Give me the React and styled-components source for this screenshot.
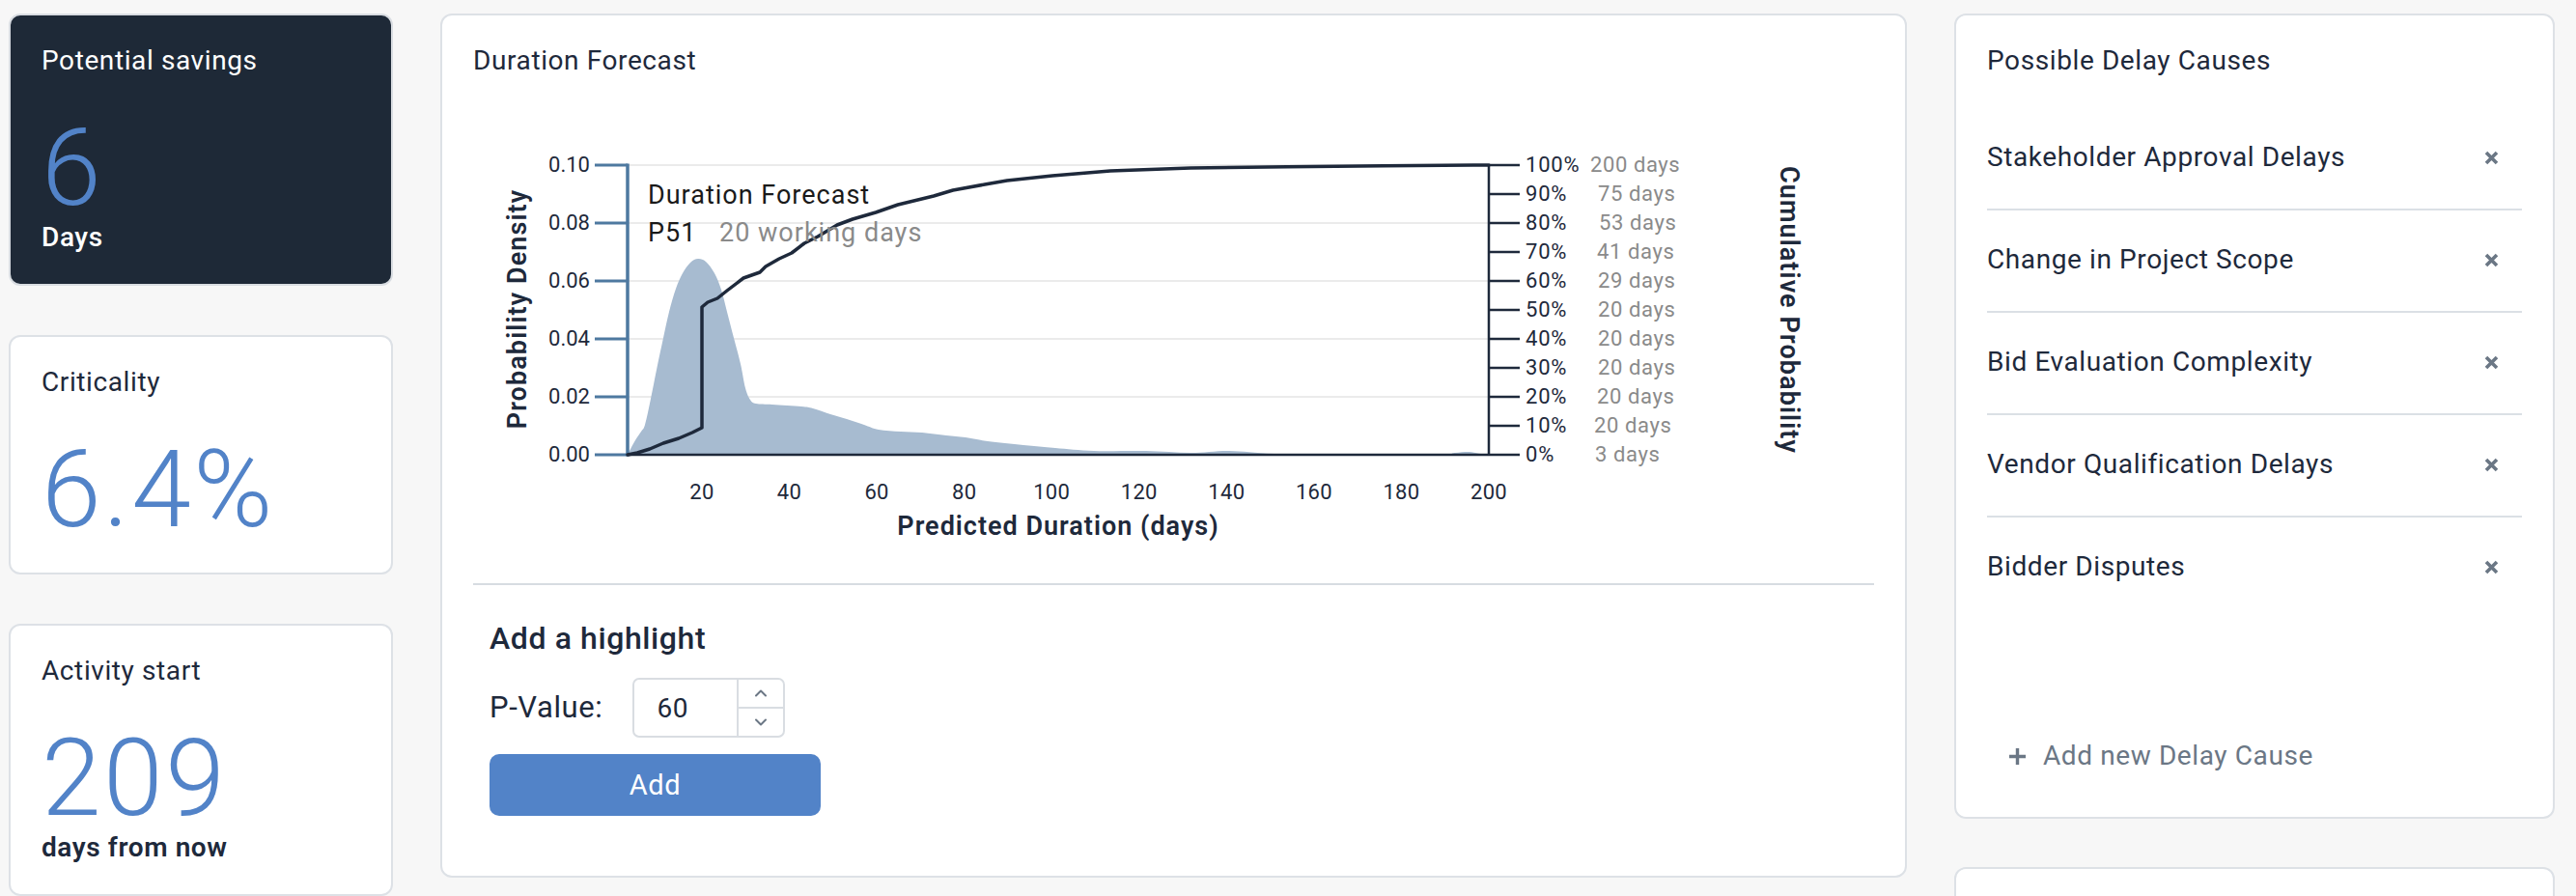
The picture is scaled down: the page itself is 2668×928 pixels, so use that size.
import React from 'react';
import styled, { createGlobalStyle } from 'styled-components';
import { ChevronUp, ChevronDown } from 'lucide-react';

const GlobalStyle = createGlobalStyle`
  html, body {
    margin: 0;
    background: #f7f7f7;
    font-family: Roboto, "Liberation Sans", sans-serif;
    letter-spacing: 0.6px;
    color: #1e293b;
  }
  * { box-sizing: border-box; }
`;

const Page = styled.div`
  display: grid;
  grid-template-columns: 398px 1519px 622px;
  column-gap: 49px;
  align-items: start;
  padding: 14px 0 0 9px;
  height: 928px;
  overflow: hidden;
`;

const Column = styled.div`
  display: flex;
  flex-direction: column;
  gap: ${({ gap }) => gap}px;
`;

const Card = styled.div`
  background: ${({ dark }) => (dark ? '#1e2937' : '#fff')};
  border: 2px solid ${({ dark }) => (dark ? '#d9dde2' : '#dde1e6')};
  border-radius: 12px;
  padding: 30px 32px 31px;
`;

const CardTitle = styled.div`
  font-size: 28px;
  line-height: 34px;
  font-weight: 400;
  color: ${({ dark }) => (dark ? '#fff' : '#1e293b')};
`;

const BigNumber = styled.div`
  margin-top: 39px;
  font-size: 111px;
  line-height: 110px;
  font-weight: 300;
  letter-spacing: 2.5px;
  color: #5283c8;
`;

const Unit = styled.div`
  font-size: 28px;
  line-height: 34px;
  font-weight: ${({ dark }) => (dark ? 500 : 600)};
  color: ${({ dark }) => (dark ? '#fff' : '#1e293b')};
`;

const StatCard = ({ title, value, unit, dark }) => (
  <Card dark={dark}>
    <CardTitle dark={dark}>{title}</CardTitle>
    <BigNumber>{value}</BigNumber>
    {unit && <Unit dark={dark}>{unit}</Unit>}
  </Card>
);

/* ---------- forecast panel ---------- */

const ForecastCard = styled(Card)`
  padding-bottom: 30px;
`;

const ChartSvg = styled.svg`
  display: block;
  margin-top: 16px;
  width: 1451px;
  height: 500px;
  font-family: Roboto, "Liberation Sans", sans-serif;
  letter-spacing: 0;
`;

const Divider = styled.div`
  margin-top: 8px;
  height: 2px;
  background: #d7dce1;
`;

const Highlight = styled.div`
  padding: 0 17px 32px;
`;

const HighlightTitle = styled.div`
  margin-top: 36px;
  font-size: 32px;
  line-height: 38px;
  font-weight: 500;
`;

const FieldRow = styled.div`
  margin-top: 22px;
  display: flex;
  align-items: center;
  gap: 31px;
`;

const FieldLabel = styled.label`
  font-size: 31px;
  line-height: 1.2;
`;

const NumberBox = styled.div`
  width: 158px;
  height: 62px;
  border: 2px solid #d9dde2;
  border-radius: 7px;
  display: flex;
  overflow: hidden;
`;

const NumberValue = styled.div`
  flex: 1;
  display: flex;
  align-items: center;
  padding-left: 23px;
  font-size: 28px;
`;

const Stepper = styled.div`
  width: 48px;
  border-left: 2px solid #d9dde2;
  display: flex;
  flex-direction: column;
`;

const StepButton = styled.div`
  flex: 1;
  display: flex;
  align-items: center;
  justify-content: center;
  color: #6b7785;
  & + & { border-top: 2px solid #d9dde2; }
`;

const AddButton = styled.button`
  margin-top: 17px;
  width: 343px;
  height: 64px;
  border: none;
  border-radius: 10px;
  background: #5283c8;
  color: #fff;
  font-family: inherit;
  letter-spacing: inherit;
  font-size: 29px;
  cursor: pointer;
`;

/* ---------- delay causes ---------- */

const CausesCard = styled(Card)`
  height: 834px;
  padding-bottom: 30px;
  display: flex;
  flex-direction: column;
`;

const CauseList = styled.div`
  margin-top: 32px;
`;

const CauseRow = styled.div`
  display: flex;
  align-items: center;
  justify-content: space-between;
  padding: 34px 0 36px;
  font-size: 28px;
  line-height: 34px;
  border-bottom: ${({ last }) => (last ? 'none' : '2px solid #dbe0e5')};
`;

const RemoveIcon = styled.svg`
  margin-right: 24px;
  flex-shrink: 0;
`;

const AddCause = styled.button`
  margin-top: auto;
  align-self: flex-start;
  display: flex;
  align-items: center;
  gap: 17px;
  padding: 16px 22px;
  border: none;
  background: none;
  color: #6b7785;
  font-family: inherit;
  letter-spacing: inherit;
  font-size: 28px;
  line-height: 34px;
  cursor: pointer;
`;

const BlankCard = styled(Card)`
  height: 240px;
`;

const causes = [
  'Stakeholder Approval Delays',
  'Change in Project Scope',
  'Bid Evaluation Complexity',
  'Vendor Qualification Delays',
  'Bidder Disputes',
];

// plot frame
const X0 = 650;
const X1 = 1542;
const Y0 = 471;
const Y1 = 171;
const xOf = (d) => X0 + ((d - 3) * (X1 - X0)) / 197;

const densityTicks = [0, 0.02, 0.04, 0.06, 0.08, 0.1];
const dayTicks = [20, 40, 60, 80, 100, 120, 140, 160, 180, 200];
const cumulative = [
  ['100%', '200 days', 1647],
  ['90%', '75 days', 1655],
  ['80%', '53 days', 1656],
  ['70%', '41 days', 1654],
  ['60%', '29 days', 1655],
  ['50%', '20 days', 1655],
  ['40%', '20 days', 1655],
  ['30%', '20 days', 1655],
  ['20%', '20 days', 1654],
  ['10%', '20 days', 1651],
  ['0%', '3 days', 1652],
];

const densityPts = [
  [650, 471], [652, 467], [658, 456], [664, 447], [668, 440], [674, 413],
  [680, 383], [687, 350], [693, 323], [700, 299], [707, 283], [715, 272],
  [723, 268], [731, 271], [740, 283], [747, 300], [753, 323], [760, 350],
  [767, 377], [772, 402], [777, 414], [783, 418], [800, 419], [830, 421],
  [842, 423], [860, 429], [877, 434], [895, 440], [910, 445], [933, 447],
  [955, 448], [980, 451], [1000, 453], [1023, 457], [1060, 461], [1093, 464],
  [1133, 467], [1187, 467], [1233, 469], [1273, 467], [1320, 470],
  [1400, 471], [1490, 471], [1507, 469], [1522, 468], [1534, 470], [1542, 471],
];

const cdfPts = [
  [650, 471], [660, 469], [673, 465], [687, 459], [703, 454], [717, 448],
  [727, 443], [727, 318], [733, 313], [743, 309], [753, 301], [770, 288],
  [787, 282], [793, 276], [807, 268], [820, 262], [833, 252], [847, 245],
  [867, 233], [883, 227], [907, 220], [930, 212], [967, 203], [987, 197],
  [1020, 191], [1043, 187], [1090, 182], [1150, 177], [1233, 174],
  [1333, 172.7], [1433, 171.7], [1542, 171],
];

// catmull-rom through the points, as cubic beziers
const smoothPath = (pts) => {
  let d = `M${pts[0][0]},${pts[0][1]}`;
  for (let i = 0; i < pts.length - 1; i++) {
    const p0 = pts[i - 1] || pts[i];
    const p1 = pts[i];
    const p2 = pts[i + 1];
    const p3 = pts[i + 2] || p2;
    const c1 = [p1[0] + (p2[0] - p0[0]) / 6, p1[1] + (p2[1] - p0[1]) / 6];
    const c2 = [p2[0] - (p3[0] - p1[0]) / 6, p2[1] - (p3[1] - p1[1]) / 6];
    d += ` C${c1[0]},${c1[1]} ${c2[0]},${c2[1]} ${p2[0]},${p2[1]}`;
  }
  return d;
};

const ForecastChart = () => (
  <ChartSvg viewBox="490 96 1451 500">
    {densityTicks.slice(1).map((t) => (
      <line key={t} x1={X0} x2={X1} y1={Y0 - t * 3000} y2={Y0 - t * 3000} stroke="#ebebeb" strokeWidth="2" />
    ))}

    <path d={smoothPath(densityPts) + ' Z'} fill="#a7bbd0" />

    {/* left axis: density */}
    <line x1={X0} x2={X0} y1={Y1 - 1.5} y2={Y0 + 1.5} stroke="#4e79a0" strokeWidth="3.5" />
    {densityTicks.map((t) => (
      <g key={t}>
        <line x1="616" x2={X0} y1={Y0 - t * 3000} y2={Y0 - t * 3000} stroke="#4e79a0" strokeWidth="3" />
        <text x="611" y={Y0 - t * 3000 + 7} textAnchor="end" fontSize="22" fill="#1e293b">
          {t.toFixed(2)}
        </text>
      </g>
    ))}
    <text transform="rotate(-90 545 320)" x="545" y="320" textAnchor="middle" fontSize="27" fontWeight="600" letterSpacing="1.1" fill="#1e293b">
      Probability Density
    </text>

    {/* bottom axis */}
    <line x1={X0} x2={X1} y1={Y0} y2={Y0} stroke="#1e293b" strokeWidth="2.5" />
    {dayTicks.map((d) => (
      <text key={d} x={xOf(d)} y="517" textAnchor="middle" fontSize="22" letterSpacing="0.3" fill="#1e293b">
        {d}
      </text>
    ))}
    <text x={(X0 + X1) / 2} y="554" textAnchor="middle" fontSize="27" fontWeight="600" letterSpacing="1" fill="#1e293b">
      Predicted Duration (days)
    </text>

    {/* right axis: cumulative */}
    <line x1={X1} x2={X1} y1={Y1} y2={Y0} stroke="#1e293b" strokeWidth="2.5" />
    {cumulative.map(([pct, days, dx], i) => {
      const y = Y1 + i * 30;
      return (
        <g key={pct}>
          <line x1={X1} x2="1574" y1={y} y2={y} stroke="#1e293b" strokeWidth="2.5" />
          <text x="1580" y={y + 7} fontSize="22" letterSpacing="0.8" fill="#1e293b">{pct}</text>
          <text x={dx} y={y + 7} fontSize="22" letterSpacing="0.6" fill="#8a8a8a">{days}</text>
        </g>
      );
    })}
    <text transform="rotate(90 1844 321)" x="1844" y="321" textAnchor="middle" fontSize="27" fontWeight="600" letterSpacing="1.1" fill="#1e293b">
      Cumulative Probability
    </text>

    <polyline
      points={cdfPts.map((p) => p.join(',')).join(' ')}
      fill="none"
      stroke="#1e293b"
      strokeWidth="3.5"
      strokeLinejoin="round"
      strokeLinecap="round"
    />

    <text x="671" y="211" fontSize="27" letterSpacing="1" fill="#1a1a1a">Duration Forecast</text>
    <text x="671" y="250" fontSize="27" letterSpacing="1" fill="#1a1a1a">P51</text>
    <text x="745" y="250" fontSize="27" letterSpacing="1" fill="#8a8a8a">20 working days</text>
  </ChartSvg>
);

const App = () => (
  <>
    <GlobalStyle />
    <Page>
      <Column gap={51}>
        <StatCard dark title="Potential savings" value="6" unit="Days" />
        <StatCard title="Criticality" value="6.4%" />
        <StatCard title="Activity start" value="209" unit="days from now" />
      </Column>

      <ForecastCard>
        <CardTitle>Duration Forecast</CardTitle>
        <ForecastChart />
        <Divider />
        <Highlight>
          <HighlightTitle>Add a highlight</HighlightTitle>
          <FieldRow>
            <FieldLabel>P-Value:</FieldLabel>
            <NumberBox>
              <NumberValue>60</NumberValue>
              <Stepper>
                <StepButton><ChevronUp size={20} strokeWidth={2.4} /></StepButton>
                <StepButton><ChevronDown size={20} strokeWidth={2.4} /></StepButton>
              </Stepper>
            </NumberBox>
          </FieldRow>
          <AddButton>Add</AddButton>
        </Highlight>
      </ForecastCard>

      <Column gap={50}>
        <CausesCard>
          <CardTitle>Possible Delay Causes</CardTitle>
          <CauseList>
            {causes.map((c, i) => (
              <CauseRow key={c} last={i === causes.length - 1}>
                <span>{c}</span>
                <RemoveIcon width="15" height="15" viewBox="0 0 15 15">
                  <path d="M2 2 L13 13 M13 2 L2 13" stroke="#6b7785" strokeWidth="3.6" />
                </RemoveIcon>
              </CauseRow>
            ))}
          </CauseList>
          <AddCause>
            <svg width="19" height="19" viewBox="0 0 19 19">
              <path d="M9.5 1 V18 M1 9.5 H18" stroke="#6b7785" strokeWidth="3.4" />
            </svg>
            Add new Delay Cause
          </AddCause>
        </CausesCard>
        <BlankCard />
      </Column>
    </Page>
  </>
);

export default App;
